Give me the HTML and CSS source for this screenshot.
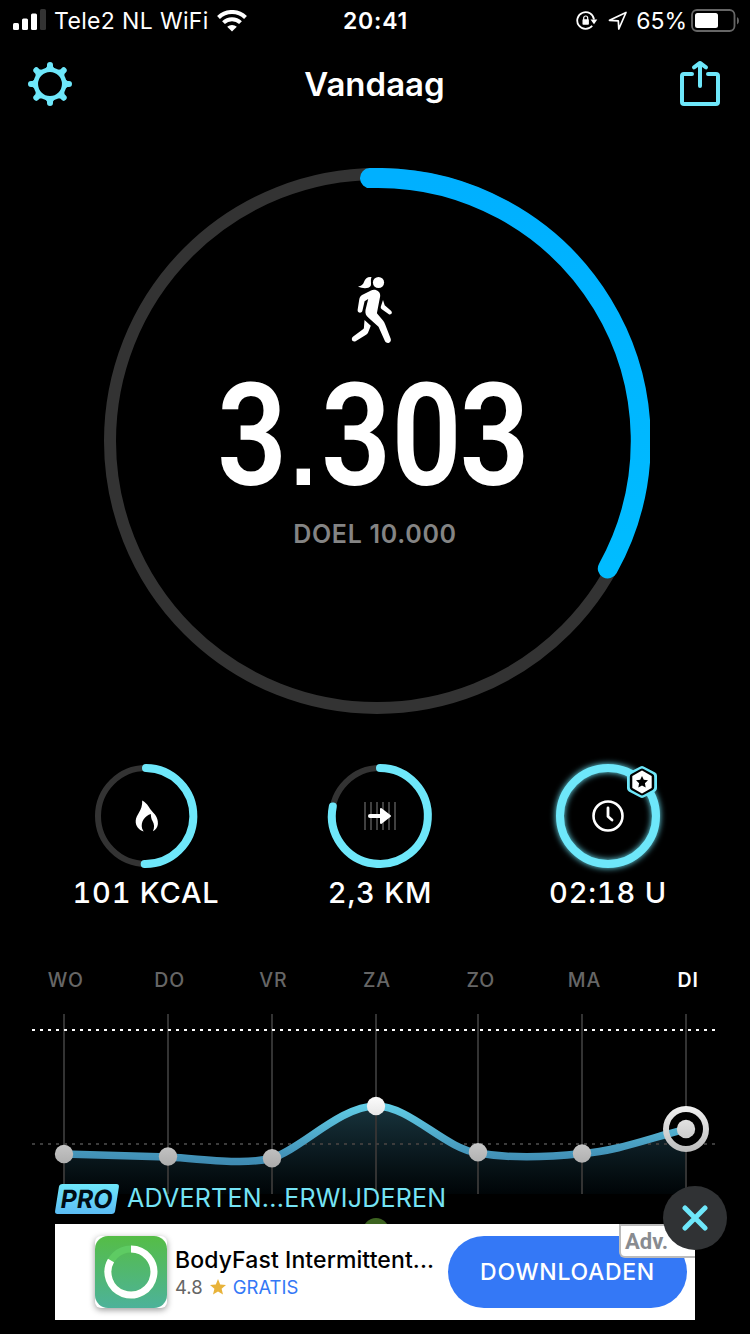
FILE: index.html
```
<!DOCTYPE html>
<html lang="nl">
<head>
  <meta charset="UTF-8" />
  <meta name="viewport" content="width=device-width, initial-scale=1.0" />
  <title>Vandaag</title>
  <link rel="stylesheet" href="styles.css">
</head>

<body>
  <!-- Status bar -->
  <div class="status">
    <div class="status-left">
      <svg width="34" height="24" viewBox="0 0 34 24">
        <g fill="#fff">
          <rect x="0" y="14" width="6" height="7" rx="1.5" />
          <rect x="9" y="9.500" width="6" height="11.500" rx="1.500" />
          <rect x="18" y="4.500" width="6" height="16.500" rx="1.500" />
        </g>
        <rect x="27" y="0" width="6" height="21" rx="1.500" fill="#333" />
      </svg>
      <span class="carrier">Tele2 NL WiFi</span>
      <svg class="wifi" width="30" height="22" viewBox="0 0 30 22">
        <g fill="none" stroke="#fff" stroke-width="4">
          <path d="M1.500 7.500a19.200 19.200 0 0 1 27 0" />
          <path d="M6.500 12.600a12.200 12.200 0 0 1 17 0" />
        </g>
        <path d="M10.200 16.800a7 7 0 0 1 9.600 0L15 21.600z" fill="#fff" />
      </svg>
    </div>
    <span class="time">20:41</span>
    <div class="status-right">
      <svg width="22" height="22" viewBox="0 0 22 22">
        <path d="M16.200 15.800a8.400 8.400 0 1 1 1.800-6.300" fill="none" stroke="#fff" stroke-width="1.800" />
        <path d="M14.500 9.500h6.800l-3.300 4.700z" fill="#fff" />
        <rect x="6.500" y="9.200" width="6.400" height="5.600" rx=".8" fill="#fff" />
        <path d="M7.700 10V8a2 2 0 0 1 4 0v2" fill="none" stroke="#fff" stroke-width="1.200" />
      </svg>
      <svg class="arrow" width="20" height="20" viewBox="0 0 20 20">
        <path d="M1.500 9.300L18 1.500 10.800 18l-.5-8.200z" fill="none" stroke="#fff" stroke-width="1.700" stroke-linejoin="round" />
      </svg>
      <span class="percent">65%</span>
      <svg class="battery" width="50" height="24" viewBox="0 0 50 24">
        <rect x="1" y="1" width="42.500" height="21" rx="5" fill="none" stroke="#666" stroke-width="1.800" />
        <rect x="4" y="4" width="23" height="15" rx="2.500" fill="#fff" />
        <path d="M46 8v7.500q2-1 2-3.700T46 8z" fill="#666" />
      </svg>
    </div>
  </div>

  <!-- Header -->
  <header class="header">
    <svg width="46" height="46" viewBox="-23 -23 46 46">
      <g stroke="#6ee7fa" stroke-width="6" stroke-linecap="round">
        <path d="M0-19V19M-19 0H19M-13.700-13.700L13.700 13.700M13.700-13.700L-13.700 13.700" />
      </g>
      <g fill="#6ee7fa">
        <path id="flare" d="M-5 15L-3 17.500H3L5 15V-15L3-17.500H-3L-5-15z" />
        <use href="#flare" transform="rotate(45)" />
        <use href="#flare" transform="rotate(90)" />
        <use href="#flare" transform="rotate(135)" />
      </g>
      <circle r="14.200" fill="#000" stroke="#6ee7fa" stroke-width="4.500" />
    </svg>
    <h1>Vandaag</h1>
    <svg class="share" width="42" height="46" viewBox="0 0 42 46" fill="none" stroke="#6ee7fa" stroke-width="4" stroke-linecap="round" stroke-linejoin="round">
      <path d="M13 14H5a2 2 0 0 0-2 2v26A2 2 0 0 0 5 44h32a2 2 0 0 0 2-2V16a2 2 0 0 0-2-2h-8" />
      <path d="M21 26V3.500M15 7.300L21 3l6 4.300" />
    </svg>
  </header>

  <!-- Steps of today -->
  <section class="steps">
    <svg class="steps-ring" width="546" height="546" viewBox="104 168 546 546">
      <defs>
        <linearGradient id="ring" x1="0" y1="0" x2="0" y2="1">
          <stop offset="0" stop-color="#00b0ff" />
          <stop offset="1" stop-color="#00bcff" />
        </linearGradient>
      </defs>
      <circle cx="377" cy="441" r="267" fill="none" stroke="#333" stroke-width="12" />
      <path d="M370 178.100A263 263 0 0 1 607.800 568.500" fill="none" stroke="url(#ring)" stroke-width="20" stroke-linecap="round" />
    </svg>
    <div class="steps-info">
      <svg class="walker" width="44" height="70" viewBox="350 275 44 70" fill="#fff">
        <circle cx="378.500" cy="282.500" r="5.600" />
        <path d="M371.500 277c-3.500-.6-6.300 1-7.300 4.500-.9 3-3 4.500-6.200 5 4.500 2.300 10.500 2.500 12.600-.5 1.200-2-.5-5 .9-9z" />
        <path d="M371 290.500c4-2 9.500.5 9.200 5.500l-3.300 17.200 6.300 7.500c1 1.200 1.400 2.300 2 3.800l5.500 14.300c1.200 4-3.800 5.800-5.700 2.500l-6.500-14.500-10-9c-2.800-2.300-3.400-4.300-3-7.800l2.700-11-3.600 2.300-2.200 9.500c-1 3.200-5 2.200-4.800-.8l1.600-10.200c.4-2.400 1-3.500 2.800-4.800z" />
        <path d="M383 300l1.700 5.300 6.300 5.500c2.200 2.200-.2 4.800-2.500 3.200l-7-5c-1-1-.8-1.800-.5-3z" />
        <path d="M364.500 320l6.300 5.700-2.700 6.800c-.5 1-1 1.700-2 2.300l-10.500 6.500c-3.300 1.500-5.200-2.700-2.400-4.700l9.800-7.300c.5-.4.800-.8.900-1.400z" />
      </svg>
      <svg class="count" width="340" height="120" viewBox="0 0 340 120">
        <text transform="scale(.86 1)" x="14 99 135 217 296" y="109">3<tspan class="point">.</tspan>303</text>
      </svg>
      <span class="goal">DOEL 10.000</span>
    </div>
  </section>

  <!-- Calories, distance, time -->
  <section class="stats">
    <div class="stat">
      <svg width="120" height="120" viewBox="-60 -60 120 120">
        <circle r="48" fill="none" stroke="#333" stroke-width="6" />
        <path d="M0-48A48 48 0 0 1-1.300 48" fill="none" stroke="#6ee7fa" stroke-width="8" stroke-linecap="round" />
        <path d="M-3.800-15.500c6 3.500 7 7.500 9.200 10 2.600 3 7 6.600 6.500 13.500-.3 3.500-2 5.500-5 7.300 1.600-3.300 1.700-7-.5-10.500-1-1.800-1.500-3.800-1.600-6.800-5.500 1.500-10.500 7.500-8.700 14.500l1.500 2.900c-4.800-1.500-8.200-5.400-7.900-10.700.4-6.500 7-9.800 6.500-20.200z" fill="#fff" />
      </svg>
      <span>101 KCAL</span>
    </div>
    <div class="stat">
      <svg width="120" height="120" viewBox="-60 -60 120 120">
        <circle r="48" fill="none" stroke="#333" stroke-width="6" />
        <path d="M0-48A48 48 0 1 1-47.200-9.500" fill="none" stroke="#6ee7fa" stroke-width="8" stroke-linecap="round" />
        <path d="M-15-14V14M-9-14V14M-3-14V14M3-14V14M9-14V14M15-14V14" stroke="#555" stroke-width="1.500" />
        <path d="M-10 0H3" stroke="#fff" stroke-width="4" stroke-linecap="round" />
        <path d="M1-7L10 0 1 7z" fill="#fff" stroke="#fff" stroke-width="2" stroke-linejoin="round" />
      </svg>
      <span>2,3 KM</span>
    </div>
    <div class="stat">
      <svg width="120" height="120" viewBox="-60 -60 120 120">
        <circle class="glow" r="48" fill="none" stroke="#6ee7fa" stroke-width="8" />
        <circle r="14.500" fill="none" stroke="#fff" stroke-width="2.600" />
        <path d="M0-8V.5L4 4" fill="none" stroke="#fff" stroke-width="2.800" stroke-linecap="round" stroke-linejoin="round" />
        <g transform="translate(34 -34)" stroke-linejoin="round">
          <path d="M0-12.500L11.500-6.300V6.300L0 12.500-11.500 6.300V-6.300z" fill="#6ee7fa" stroke="#6ee7fa" stroke-width="7" />
          <path d="M0-10.500L9.200-5.300V5.300L0 10.500-9.200 5.300V-5.300z" fill="#fff" stroke="#000" stroke-width="6" />
          <path d="M0-10.500L8.700-5.500V5.500L0 10.500-8.700 5.500V-5.500z" fill="#fff" stroke="#fff" stroke-width="2" />
          <path d="M0-6L1.800-2.200 6-1.700 2.900 1.200 3.700 5.500 0 3.400-3.700 5.500-2.900 1.200-6-1.700-1.800-2.200z" fill="#000" />
        </g>
      </svg>
      <span>02:18 U</span>
    </div>
  </section>

  <!-- Week chart -->
  <section class="week">
    <div class="days">
      <span>WO</span><span>DO</span><span>VR</span><span>ZA</span><span>ZO</span><span>MA</span><span class="today">DI</span>
    </div>
    <svg class="chart" width="750" height="234" viewBox="0 1010 750 234">
      <defs>
        <linearGradient id="line" gradientUnits="userSpaceOnUse" x1="0" y1="1100" x2="0" y2="1162">
          <stop offset="0" stop-color="#64d2ea" />
          <stop offset="1" stop-color="#3f8bb2" />
        </linearGradient>
        <linearGradient id="area" gradientUnits="userSpaceOnUse" x1="0" y1="1106" x2="0" y2="1194">
          <stop offset="0" stop-color="#18343d" />
          <stop offset="1" stop-color="#000508" stop-opacity=".9" />
        </linearGradient>
        <linearGradient id="dot" gradientUnits="userSpaceOnUse" x1="0" y1="1100" x2="0" y2="1168">
          <stop offset="0" stop-color="#f8f8f8" />
          <stop offset="1" stop-color="#aaa" />
        </linearGradient>
      </defs>
      <path d="M64 1154L168 1157C215 1160 245 1165 272 1158C300 1150 340 1106 376 1106C410 1106 445 1149 478 1153C512 1159 550 1157 582 1153.500C618 1151 650 1138 686 1129V1194H64z" fill="url(#area)" />
      <path d="M64 1014V1194M168 1014V1194M272 1014V1194M376 1014V1194M478 1014V1194M582 1014V1194M686 1014V1194" stroke="#333" stroke-width="2" />
      <path d="M32 1030H716" stroke="#fff" stroke-width="2" stroke-dasharray="3 5" />
      <path d="M32 1144H716" stroke="#3c3c3c" stroke-width="2" stroke-dasharray="3 5" />
      <path d="M64 1154L168 1157C215 1160 245 1165 272 1158C300 1150 340 1106 376 1106C410 1106 445 1149 478 1153C512 1159 550 1157 582 1153.500C618 1151 650 1138 686 1129" fill="none" stroke="url(#line)" stroke-width="7.500" />
      <circle cx="686" cy="1129" r="20" fill="#000" />
      <path d="M668 1134L686 1129" stroke="url(#line)" stroke-width="7.500" />
      <g fill="url(#dot)">
        <circle cx="64" cy="1154" r="9.200" />
        <circle cx="168" cy="1156.500" r="9.200" />
        <circle cx="272" cy="1158.300" r="9.200" />
        <circle cx="376" cy="1106" r="9.200" />
        <circle cx="478" cy="1152.300" r="9.200" />
        <circle cx="582" cy="1153.500" r="9.200" />
        <circle cx="686" cy="1129" r="9.200" />
      </g>
      <circle cx="686" cy="1129" r="20" fill="none" stroke="url(#dot)" stroke-width="6" />
      <circle cx="376" cy="1231" r="13" fill="#3c6320" />
    </svg>
  </section>

  <!-- Banner over the chart -->
  <div class="banner">
    <div class="pro">
      <span class="pro-badge"><b>PRO</b></span>
      <span class="pro-text">ADVERTEN...ERWIJDEREN</span>
    </div>
    <div class="ad">
      <svg class="app-icon" width="72" height="72" viewBox="0 0 72 72">
        <defs>
          <linearGradient id="app" x1="0" y1="0" x2="0" y2="1">
            <stop offset="0" stop-color="#55bd46" />
            <stop offset="1" stop-color="#4db29a" />
          </linearGradient>
        </defs>
        <rect width="72" height="72" rx="13" fill="url(#app)" />
        <circle cx="36" cy="36" r="23" fill="none" stroke="#5ecb63" stroke-width="7" />
        <path d="M36 13A23 23 0 1 1 16 24.500" fill="none" stroke="#fff" stroke-width="7" />
      </svg>
      <div class="app-info">
        <span class="app-name">BodyFast Intermittent...</span>
        <div class="app-meta">
          <span>4.8</span>
          <svg width="16" height="16" viewBox="0 0 16 16"><path d="M8 0l2.200 5.400 5.800.5-4.400 3.800L13 15.500l-5-3.100-5 3.100 1.400-5.800L0 5.900l5.800-.5z" fill="#e8b33a" /></svg>
          <span class="free">GRATIS</span>
        </div>
      </div>
      <span class="download">DOWNLOADEN</span>
      <span class="adv">Adv.</span>
    </div>
    <div class="close">
      <svg width="26" height="26" viewBox="0 0 26 26"><path d="M3 3L23 23M23 3L3 23" stroke="#6ee7fa" stroke-width="5" stroke-linecap="round" /></svg>
    </div>
  </div>
</body>
</html>
```
FILE: styles.css
```
* { box-sizing: border-box; }

body {
  margin: 0;
  width: 750px;
  height: 1334px;
  position: relative;
  overflow: hidden;
  background: #000;
  color: #fff;
  font-family: Inter, "Liberation Sans", sans-serif;
}

svg { display: block; flex: none; }
span { white-space: nowrap; }

/* ---------- Status bar ---------- */
.status {
  height: 40px;
  display: grid;
  grid-template-columns: 1fr auto 1fr;
  align-items: center;
  padding: 1px 9px 0 13px;
  font-size: 23px;
}
.status-left, .status-right { display: flex; align-items: center; }
.status-right { justify-content: flex-end; }
.carrier { margin-left: 7px; letter-spacing: 0.35px; }
.wifi { margin-left: 8px; }
.time { margin-right: 3px; font-weight: 600; letter-spacing: 0.8px; }
.arrow { margin-left: 10px; }
.percent { margin-left: 8px; }
.battery { margin-left: 4px; }

/* ---------- Header ---------- */
.header {
  height: 88px;
  display: flex;
  align-items: center;
  justify-content: space-between;
  padding: 0 29px 0 27px;
}
.share { margin-bottom: 2px; }
h1 {
  margin: 0 3px 0 0;
  font-size: 33px;
  font-weight: 600;
}

/* ---------- Big ring ---------- */
.steps {
  display: grid;
  width: 546px;
  height: 546px;
  margin: 40px 0 0 104px;
}
.steps-ring, .steps-info { grid-area: 1 / 1; }
.steps-info {
  display: flex;
  flex-direction: column;
  align-items: center;
  padding: 107px 4px 0 0;
}
.walker { margin-right: 6px; }
.count { margin-top: 31px; overflow: visible; }
.count text {
  font-family: Roboto, sans-serif;
  font-size: 143px;
  font-weight: 600;
  fill: #fff;
}
.count .point {
  font-family: "Liberation Sans", sans-serif;
  font-size: 110px;
  font-weight: 700;
}
.goal {
  margin-top: 22px;
  color: #848484;
  font-size: 25px;
  font-weight: 600;
  line-height: 32px;
  letter-spacing: 0.7px;
}

/* ---------- Small rings ---------- */
.stats {
  display: flex;
  justify-content: space-between;
  margin-top: 42px;
  padding: 0 42px 0 46px;
}
.stat {
  width: 200px;
  display: flex;
  flex-direction: column;
  align-items: center;
  font-size: 29px;
  font-weight: 500;
  font-variant-numeric: tabular-nums;
  line-height: 34px;
  letter-spacing: 0.8px;
}
.stat:nth-child(2) { margin-left: 6px; }
.glow { filter: drop-shadow(0 0 3px #6ee7fa); }

/* ---------- Week chart ---------- */
.week { margin-top: 57px; }
.days {
  display: flex;
  justify-content: space-between;
  padding: 0 10px 0 14px;
  height: 43px;
  color: #666;
  font-size: 19.5px;
  font-weight: 500;
  line-height: 27px;
  letter-spacing: 0.9px;
}
.days span { width: 104px; text-align: center; }
.days .today { color: #fff; font-weight: 600; }

/* ---------- Banner ---------- */
.banner {
  position: absolute;
  left: 55px;
  top: 1181px;
  width: 640px;
}
.pro { display: flex; align-items: center; height: 43px; padding-bottom: 9px; }
.pro-badge {
  width: 60px;
  height: 30px;
  margin: 1px 0 0 2px;
  border-radius: 3px;
  background: linear-gradient(#6ee7fa, #5cbcf5);
  color: #000c14;
  font-size: 25px;
  line-height: 30px;
  text-align: center;
  transform: skewX(-9deg);
}
.pro-text {
  margin-left: 10px;
  color: #75e3f5;
  font-size: 25px;
  letter-spacing: 0.25px;
}
.ad {
  position: relative;
  display: flex;
  align-items: center;
  height: 96px;
  padding: 0 8px 0 40px;
  background: #fff;
  color: #000;
}
.app-icon { border-radius: 6px; box-shadow: 0 2px 6px #0006; }
.app-info { flex: 1; padding-left: 8px; }
.app-name {
  display: block;
  font-size: 23px;
  font-weight: 500;
  line-height: 30px;
  letter-spacing: 0.1px;
}
.app-meta {
  display: flex;
  align-items: center;
  gap: 7px;
  color: #666;
  font-size: 18.5px;
  line-height: 24px;
}
.free { color: #3478f6; }
.download {
  width: 239px;
  height: 72px;
  border-radius: 36px;
  background: #3478f6;
  color: #fff;
  font-size: 23px;
  font-weight: 500;
  line-height: 72px;
  letter-spacing: 0.7px;
  text-align: center;
}
.adv {
  position: absolute;
  top: 0;
  right: 0;
  width: 76px;
  height: 34px;
  padding-left: 4px;
  border: 2px solid #bbb;
  border-right: 0;
  border-bottom-left-radius: 6px;
  background: #fff;
  color: #888b90;
  font: bold 22px/31px Roboto, sans-serif;
}
.close {
  position: absolute;
  left: 608px;
  top: 5px;
  width: 64px;
  height: 64px;
  border-radius: 50%;
  background: #303234;
  display: flex;
  align-items: center;
  justify-content: center;
}
```
